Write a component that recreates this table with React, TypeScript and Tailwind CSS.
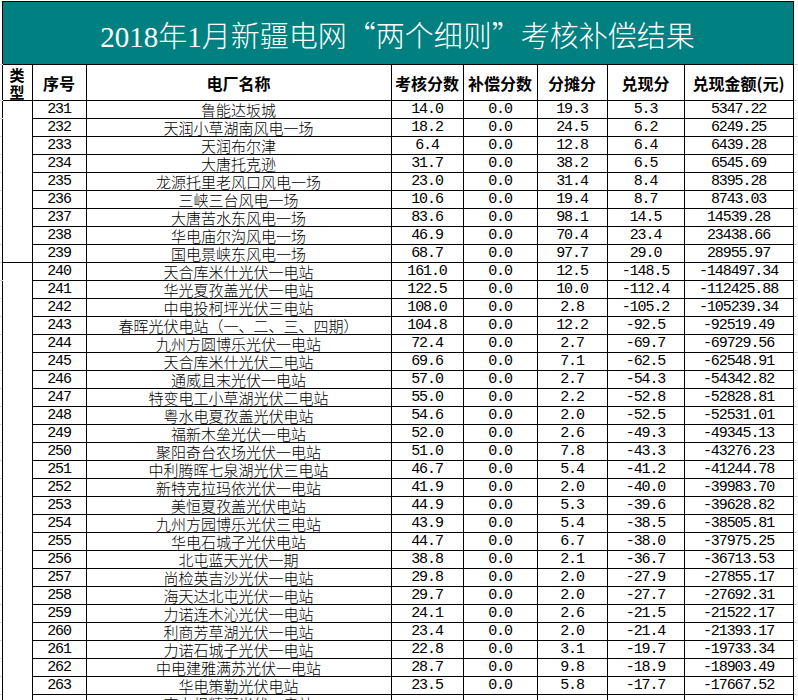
import React from 'react';

type Row = [string, string, string, string, string, string, string];

const wind: Row[] = [
  ['231', '鲁能达坂城', '14.0', '0.0', '19.3', '5.3', '5347.22'],
  ['232', '天润小草湖南风电一场', '18.2', '0.0', '24.5', '6.2', '6249.25'],
  ['233', '天润布尔津', '6.4', '0.0', '12.8', '6.4', '6439.28'],
  ['234', '大唐托克逊', '31.7', '0.0', '38.2', '6.5', '6545.69'],
  ['235', '龙源托里老风口风电一场', '23.0', '0.0', '31.4', '8.4', '8395.28'],
  ['236', '三峡三台风电一场', '10.6', '0.0', '19.4', '8.7', '8743.03'],
  ['237', '大唐苦水东风电一场', '83.6', '0.0', '98.1', '14.5', '14539.28'],
  ['238', '华电庙尔沟风电一场', '46.9', '0.0', '70.4', '23.4', '23438.66'],
  ['239', '国电景峡东风电一场', '68.7', '0.0', '97.7', '29.0', '28955.97'],
];

const solar: Row[] = [
  ['240', '天合库米什光伏一电站', '161.0', '0.0', '12.5', '-148.5', '-148497.34'],
  ['241', '华光夏孜盖光伏一电站', '122.5', '0.0', '10.0', '-112.4', '-112425.88'],
  ['242', '中电投柯坪光伏三电站', '108.0', '0.0', '2.8', '-105.2', '-105239.34'],
  ['243', '春晖光伏电站（一、二、三、四期）', '104.8', '0.0', '12.2', '-92.5', '-92519.49'],
  ['244', '九州方圆博乐光伏一电站', '72.4', '0.0', '2.7', '-69.7', '-69729.56'],
  ['245', '天合库米什光伏二电站', '69.6', '0.0', '7.1', '-62.5', '-62548.91'],
  ['246', '通威且末光伏一电站', '57.0', '0.0', '2.7', '-54.3', '-54342.82'],
  ['247', '特变电工小草湖光伏二电站', '55.0', '0.0', '2.2', '-52.8', '-52828.81'],
  ['248', '粤水电夏孜盖光伏电站', '54.6', '0.0', '2.0', '-52.5', '-52531.01'],
  ['249', '福新木垒光伏一电站', '52.0', '0.0', '2.6', '-49.3', '-49345.13'],
  ['250', '聚阳奇台农场光伏一电站', '51.0', '0.0', '7.8', '-43.3', '-43276.23'],
  ['251', '中利腾晖七泉湖光伏三电站', '46.7', '0.0', '5.4', '-41.2', '-41244.78'],
  ['252', '新特克拉玛依光伏一电站', '41.9', '0.0', '2.0', '-40.0', '-39983.70'],
  ['253', '美恒夏孜盖光伏电站', '44.9', '0.0', '5.3', '-39.6', '-39628.82'],
  ['254', '九州方园博乐光伏三电站', '43.9', '0.0', '5.4', '-38.5', '-38505.81'],
  ['255', '华电石城子光伏电站', '44.7', '0.0', '6.7', '-38.0', '-37975.25'],
  ['256', '北屯蓝天光伏一期', '38.8', '0.0', '2.1', '-36.7', '-36713.53'],
  ['257', '尚检英吉沙光伏一电站', '29.8', '0.0', '2.0', '-27.9', '-27855.17'],
  ['258', '海天达北屯光伏一电站', '29.7', '0.0', '2.0', '-27.7', '-27692.31'],
  ['259', '力诺连木沁光伏一电站', '24.1', '0.0', '2.6', '-21.5', '-21522.17'],
  ['260', '利商芳草湖光伏一电站', '23.4', '0.0', '2.0', '-21.4', '-21393.17'],
  ['261', '力诺石城子光伏一电站', '22.8', '0.0', '3.1', '-19.7', '-19733.34'],
  ['262', '中电建雅满苏光伏一电站', '28.7', '0.0', '9.8', '-18.9', '-18903.49'],
  ['263', '华电策勒光伏电站', '23.5', '0.0', '5.8', '-17.7', '-17667.52'],
  ['', '克力根精河光伏一电站', '', '', '', '', ''],
];

const cell = 'border border-black p-0 text-center whitespace-nowrap overflow-hidden';
const num = cell + " font-['Liberation_Mono',monospace] text-[15px] tracking-[-1.1px] leading-[16px] pt-[1px]";
const name = cell + " font-['Noto_Sans_CJK_SC',sans-serif] font-light text-[15px] leading-[16px] pt-[1px]";
const head = cell + " font-['Noto_Sans_CJK_SC',sans-serif] font-bold text-[16px] leading-[20px]";
// faint spreadsheet grid outside the table
const ghost = 'p-0 border-0 border-b border-b-[#d4d4d4]';

const DataRow = ({ r, type }: { r: Row; type?: number }) => (
  <tr className="h-[17px]">
    <td className={ghost}></td>
    {type ? <td rowSpan={type} className={cell}></td> : null}
    <td className={num}>{r[0]}</td>
    <td className={name}>{r[1]}</td>
    <td className={num}>{r[2]}</td>
    <td className={num}>{r[3]}</td>
    <td className={num}>{r[4]}</td>
    <td className={num}>{r[5]}</td>
    <td className={num}>{r[6]}</td>
    <td className={ghost}></td>
  </tr>
);

const cjk = "font-['Noto_Sans_CJK_SC',sans-serif]";

export default function App() {
  return (
    <div className="w-[798px] h-[700px] overflow-hidden bg-white text-black">
      <table className="table-fixed border-collapse mt-[1px] w-[798px]">
        <colgroup>
          <col className="w-[2px]" />
          <col className="w-[30px]" />
          <col className="w-[54px]" />
          <col className="w-[305px]" />
          <col className="w-[72px]" />
          <col className="w-[74px]" />
          <col className="w-[70px]" />
          <col className="w-[77px]" />
          <col className="w-[109px]" />
          <col className="w-[5px]" />
        </colgroup>
        <tbody>
          <tr className="h-[63px]">
            <td className={ghost}></td>
            <td
              colSpan={8}
              className="border border-black p-0 pt-[4px] bg-[#008080] text-center text-white text-[29px] leading-[40px] font-['Liberation_Serif','Noto_Sans_CJK_SC',serif] font-light"
            >
              2018年1月新疆电网<span className={cjk}>“</span>两个细则<span className={cjk}>”</span>考核补偿结果
            </td>
            <td className={ghost}></td>
          </tr>
          <tr className="h-[36px]">
            <td className={ghost}></td>
            <td className={cell + " font-['Noto_Sans_CJK_SC',sans-serif] font-bold text-[15px] leading-[17px]"}>
              <div>类</div>
              <div>型</div>
            </td>
            <td className={head}>序号</td>
            <td className={head}>电厂名称</td>
            <td className={head}>考核分数</td>
            <td className={head}>补偿分数</td>
            <td className={head}>分摊分</td>
            <td className={head}>兑现分</td>
            <td className={head}>兑现金额(元)</td>
            <td className={ghost}></td>
          </tr>
          {wind.map((r, i) => (
            <DataRow key={r[0]} r={r} type={i === 0 ? wind.length : undefined} />
          ))}
          {solar.map((r, i) => (
            <DataRow key={'s' + i} r={r} type={i === 0 ? solar.length : undefined} />
          ))}
        </tbody>
      </table>
    </div>
  );
}
